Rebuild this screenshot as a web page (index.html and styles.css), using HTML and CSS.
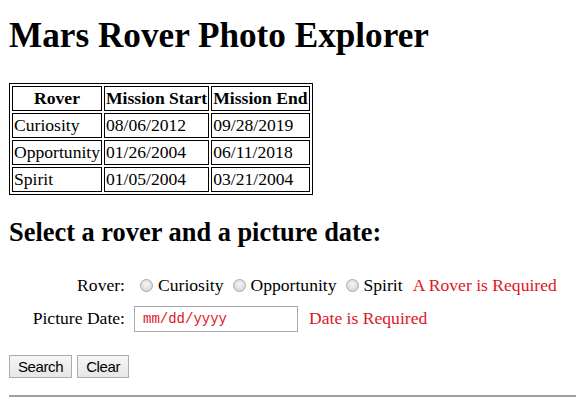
FILE: index.html
```html
<!DOCTYPE html>
<html>
<head>
<meta charset="utf-8">
<link rel="stylesheet" href="styles.css">
</head>
<body>
<h1 class="title">Mars Rover Photo Explorer</h1>
<table class="missions" border="1">
  <tr><th>Rover</th><th>Mission Start</th><th>Mission End</th></tr>
  <tr><td>Curiosity</td><td>08/06/2012</td><td>09/28/2019</td></tr>
  <tr><td>Opportunity</td><td>01/26/2004</td><td>06/11/2018</td></tr>
  <tr><td>Spirit</td><td>01/05/2004</td><td>03/21/2004</td></tr>
</table>
<h2 class="subtitle">Select a rover and a picture date:</h2>
<form class="search-form">
  <div class="row">
    <span class="label">Rover:</span>
    <div class="field">
      <label class="opt"><input type="radio" name="rover" class="radio">Curiosity</label>
      <label class="opt"><input type="radio" name="rover" class="radio">Opportunity</label>
      <label class="opt"><input type="radio" name="rover" class="radio">Spirit</label>
      <span class="error">A Rover is Required</span>
    </div>
  </div>
  <div class="row">
    <span class="label">Picture Date:</span>
    <div class="field">
      <input type="text" class="date" placeholder="mm/dd/yyyy">
      <span class="error">Date is Required</span>
    </div>
  </div>
  <div class="buttons">
    <button type="button" class="btn">Search</button>
    <button type="button" class="btn">Clear</button>
  </div>
</form>
<hr class="rule">
</body>
</html>
```
FILE: styles.css
```css
body {
  margin: 0 0 8px 9px;
  padding-top: 1px;
  font-family: "Liberation Serif", "Times New Roman", serif;
  font-size: 17.6px;
  color: #000;
  background: #fff;
}
.title {
  font-size: 35.2px;
  line-height: 40px;
  font-weight: bold;
  margin: 15px 0 27px 0;
}
.missions {
  border-collapse: separate;
  border-spacing: 2px;
  border: 1px solid #000;
}
.missions th, .missions td {
  border: 1px solid #000;
  padding: 1px;
  line-height: 21px;
  text-align: left;
}
.missions th { text-align: center; }
.subtitle {
  font-size: 26.4px;
  line-height: 30px;
  font-weight: bold;
  margin: 22px 0 22px 0;
}
.search-form .row {
  display: flex;
  align-items: center;
  height: 33px;
}
.label {
  width: 116px;
  text-align: right;
  margin-right: 9px;
}
.field {
  display: flex;
  align-items: center;
}
.opt {
  display: inline-flex;
  align-items: center;
  margin-right: 9px;
  font-family: "Liberation Serif", "Times New Roman", serif;
}
.opt:first-child { margin-left: 6px; }
.radio {
  appearance: none;
  -webkit-appearance: none;
  width: 13px;
  height: 13px;
  border-radius: 50%;
  border: 1px solid #a8a8a8;
  background: radial-gradient(circle at 50% 40%, #f6f6f6 0%, #dedede 60%, #cacaca 100%);
  margin: 0 5px 0 0;
}
.error {
  color: #e0141e;
  margin-left: 1px;
}
.date {
  width: 164px;
  height: 26px;
  box-sizing: border-box;
  border: 1px solid #a9a9a9;
  padding: 0 8px;
  margin: 0 10px 0 0;
  font-family: "Liberation Mono", "DejaVu Sans Mono", monospace;
  font-size: 14px;
  outline: none;
}
.date::placeholder {
  color: #e0141e;
  opacity: 1;
}
.buttons {
  margin-top: 20px;
  display: flex;
  gap: 5px;
}
.btn {
  font-family: "Liberation Sans", Arial, sans-serif;
  font-size: 15px;
  letter-spacing: -0.4px;
  color: #000;
  background: linear-gradient(#f6f6f6, #e6e6e6);
  border: 1px solid #adadad;
  border-radius: 0;
  padding: 0 8px;
  height: 23px;
}
.rule {
  margin: 17px 0 0 0;
  border: none;
  border-top: 2px solid #a0a0a0;
}
```
